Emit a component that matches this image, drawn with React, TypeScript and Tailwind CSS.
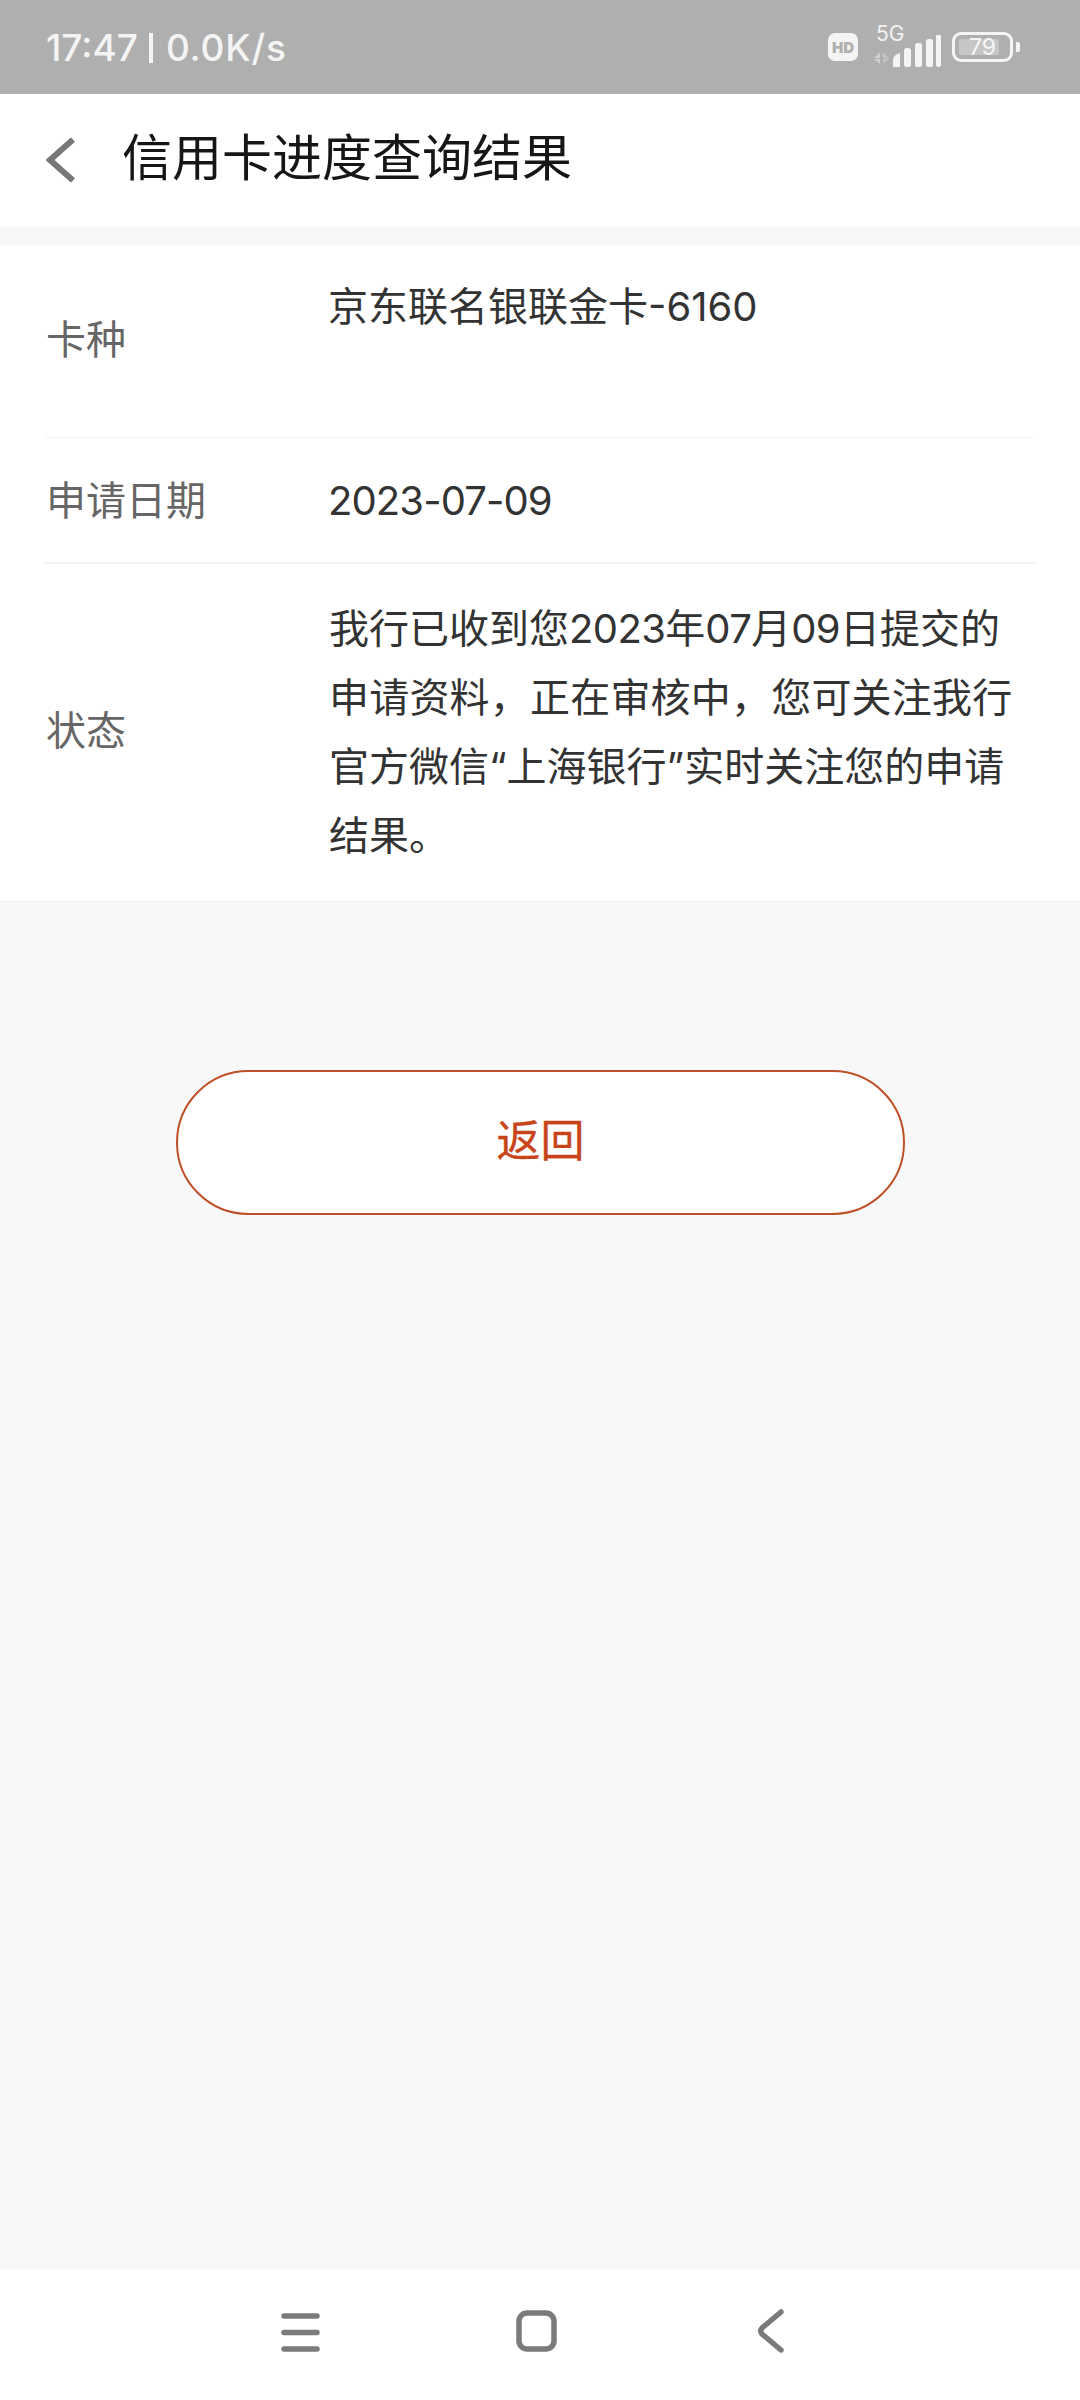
import React from "react";

const cjk = { fontFamily: '"Inter", "Noto Sans CJK SC", sans-serif' };

function StatusIcons() {
  return (
    <div className="flex items-center h-[30px]">
      <div className="w-[30px] h-[28px] rounded-[7px] bg-[#f4f4f4] flex items-center justify-center text-[15px] font-black leading-none text-[#afafaf]">HD</div>
      <div className="ml-[15px] w-[68px] h-[40px] flex flex-col relative">
        <span className="text-[#f2f2f2] text-[21px] leading-[20px] -mt-[3px] ml-[3px]">5G</span>
        <svg width="68" height="32" viewBox="0 0 68 32" className="absolute left-0 top-[8px]">
          <path d="M7 17.5 L1 23 H7 Z M7 24 H1 L7 29 Z" fill="#d0d0d0" />
          <path d="M10 17.5 L16 23 H10 Z M10 24 H16 L10 29 Z" fill="#c4c4c4" />
          <path d="M20 25 Q20 20 27 18 V32 H20 Z" fill="#f4f4f4" />
          <rect x="31" y="13" width="7" height="19" rx="2.5" fill="#f4f4f4" />
          <rect x="42" y="8" width="7" height="24" rx="2.5" fill="#f4f4f4" />
          <rect x="53" y="4" width="7" height="28" rx="2.5" fill="#f4f4f4" />
          <rect x="63" y="-1" width="5" height="33" rx="2.5" fill="#f4f4f4" />
        </svg>
      </div>
      <div className="ml-[11px] relative w-[61px] h-[30px] rounded-[9px] border-[3px] border-[#f4f4f4] overflow-hidden flex items-center justify-center">
        <div className="absolute left-[4px] top-[4px] bottom-[4px] w-[40px] bg-[#c6c6c6] rounded-[2px]" />
        <span className="relative text-[#f6f6f6] text-[23px] leading-none">79</span>
      </div>
      <div className="ml-[3px] w-[4px] h-[10px] bg-[#f4f4f4] rounded-r-[2px]" />
    </div>
  );
}

export default function App() {
  return (
    <div className="w-[1080px] h-[2400px] flex flex-col bg-[#f8f8f8]" style={cjk}>
      <div className="h-[94px] bg-[#afafaf] flex items-center justify-between pl-[46px] pr-[60px] shrink-0">
        <span className="flex items-center text-[#f4f4f4] text-[37px] leading-none font-medium">
          <span>17:47</span>
          <span className="w-[4px] h-[30px] bg-[#f4f4f4] ml-[11px] mr-[13px] mt-[2px]" />
          <span className="tracking-[0.8px]">0.0K/s</span>
        </span>
        <StatusIcons />
      </div>

      <div className="h-[132px] bg-white flex items-center pl-[46px] shrink-0">
        <svg width="30" height="44" viewBox="0 0 30 44" className="shrink-0">
          <path d="M27 1.5 L4 22 L27 42.5" fill="none" stroke="#777777" strokeWidth="6" />
        </svg>
        <span className="ml-[46px] -mt-[4px] text-[50px] leading-none text-[#161616]">信用卡进度查询结果</span>
      </div>

      <div className="mt-[19px] bg-white shrink-0 pb-[1px]">
        <div className="mx-[45px] h-[193px] flex items-center border-b border-[#f2f2f2] pl-[1px]">
          <span className="w-[283px] shrink-0 text-[40px] leading-[69px] text-[#666666] -mt-[4px]">卡种</span>
          <span className="self-start mt-[27px] -ml-[1px] text-[40px] leading-[69px] text-[#333333]">京东联名银联金卡-6160</span>
        </div>
        <div className="mx-[45px] h-[126px] flex items-center border-b-2 border-[#f4f4f4] pl-[1px]">
          <span className="w-[283px] shrink-0 text-[40px] leading-[69px] text-[#666666]">申请日期</span>
          <span className="-ml-[1px] text-[40px] leading-[69px] text-[#333333] tracking-[-0.9px]">2023-07-09</span>
        </div>
        <div className="mx-[45px] h-[336px] flex items-center pl-[1px]">
          <span className="w-[284px] shrink-0 text-[40px] leading-[69px] text-[#666666] -mt-[3px]">状态</span>
          <span className="w-[700px] text-[40px] leading-[69px] text-[#333333] -ml-[1px]">
            我行已收到您<span className="tracking-[-0.6px]">2023</span>年<span className="tracking-[-0.6px]">07</span>月<span className="tracking-[-0.6px]">09</span>日提交的
            <br />
            <span className="tracking-[0.2px]">申请资料，正在审核中，您可关注我行</span>
            <br />
            官方微信“上海银行”实时关注您的申请
            <br />
            结果。
          </span>
        </div>
      </div>

      <div className="flex-1 flex flex-col items-center border-t border-[#f0f0f0]">
        <button className="mt-[168px] ml-[1px] w-[729px] h-[145px] rounded-full border-2 border-[#bf4f28] bg-white text-[44px] leading-none text-[#c8441a] pb-[3px] [-webkit-text-stroke:0.3px_#c8441a]">
          返回
        </button>
      </div>

      <div className="h-[131px] bg-white shrink-0 flex items-start pt-[41px] pl-[281px]">
        <svg width="40" height="42" viewBox="0 0 40 42" className="shrink-0 mt-[1px]">
          <g stroke="#7b7b7b" strokeWidth="5.5" strokeLinecap="round">
            <path d="M3 5 H36" />
            <path d="M3 21.5 H36" />
            <path d="M3 38 H36" />
          </g>
        </svg>
        <svg width="42" height="42" viewBox="0 0 42 42" className="shrink-0 ml-[195px]">
          <rect x="3" y="3" width="35" height="36" rx="8" fill="none" stroke="#7b7b7b" strokeWidth="5.5" />
        </svg>
        <svg width="28" height="44" viewBox="0 0 28 44" className="shrink-0 ml-[199px] -mt-[1px]">
          <path d="M24 3 L5 19 Q2.5 22 5 25 L24 41" fill="none" stroke="#7b7b7b" strokeWidth="5.5" strokeLinecap="round" />
        </svg>
      </div>
    </div>
  );
}
